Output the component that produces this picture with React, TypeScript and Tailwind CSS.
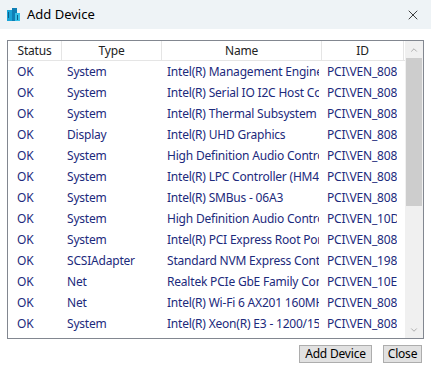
import { X, ChevronUp, ChevronDown } from "lucide-react";

const rows = [
  ["OK", "System", "Intel(R) Management Engine Interface", "PCI\\VEN_8086"],
  ["OK", "System", "Intel(R) Serial IO I2C Host Controller", "PCI\\VEN_8086"],
  ["OK", "System", "Intel(R) Thermal Subsystem - 06F9", "PCI\\VEN_8086"],
  ["OK", "Display", "Intel(R) UHD Graphics", "PCI\\VEN_8086"],
  ["OK", "System", "High Definition Audio Controller", "PCI\\VEN_8086"],
  ["OK", "System", "Intel(R) LPC Controller (HM470)", "PCI\\VEN_8086"],
  ["OK", "System", "Intel(R) SMBus - 06A3", "PCI\\VEN_8086"],
  ["OK", "System", "High Definition Audio Controller", "PCI\\VEN_10DE"],
  ["OK", "System", "Intel(R) PCI Express Root Port", "PCI\\VEN_8086"],
  ["OK", "SCSIAdapter", "Standard NVM Express Controller", "PCI\\VEN_1987"],
  ["OK", "Net", "Realtek PCIe GbE Family Controller", "PCI\\VEN_10EC"],
  ["OK", "Net", "Intel(R) Wi-Fi 6 AX201 160MHz", "PCI\\VEN_8086"],
  ["OK", "System", "Intel(R) Xeon(R) E3 - 1200/1500", "PCI\\VEN_8086"],
];

function AppIcon() {
  return (
    <svg width="16" height="16" viewBox="0 0 16 16">
      <rect x="1" y="3" width="5" height="11" fill="#1aa3d6" />
      <rect x="6" y="1" width="5" height="13" fill="#0f7fb5" />
      <rect x="9" y="6" width="5" height="8" fill="#36c0e8" />
      <rect x="2" y="5" width="1" height="6" fill="#0b5f8a" />
      <rect x="11" y="8" width="1" height="5" fill="#0b5f8a" />
    </svg>
  );
}

export default function App() {
  return (
    <div
      className="w-[431px] h-[376px] bg-white flex flex-col text-[12px] tracking-[-0.2px] overflow-hidden"
      style={{ fontFamily: '"Noto Sans", "Open Sans", sans-serif' }}
    >
      {/* Title bar */}
      <div className="h-[29px] bg-[#eef3f6] flex items-center pl-[6px] pr-[10px]">
        <AppIcon />
        <span className="ml-[5px] text-[13px] text-black tracking-normal">Add Device</span>
        <X className="ml-auto h-[16px] w-[16px] text-[#222]" strokeWidth={1.3} />
      </div>

      {/* List box */}
      <div className="mt-[11px] mx-[7px] h-[299px] border border-[#828790] flex">
        <div className="flex-1 flex flex-col overflow-hidden">
          <div className="h-[20px] flex border-b border-[#e5e5e5] text-[#222]">
            <div className="w-[54px] border-r border-[#e5e5e5] flex items-center justify-center">Status</div>
            <div className="w-[100px] border-r border-[#e5e5e5] flex items-center justify-center">Type</div>
            <div className="w-[160px] border-r border-[#e5e5e5] flex items-center justify-center">Name</div>
            <div className="w-[82px] border-r border-[#e5e5e5] flex items-center justify-center">ID</div>
          </div>
          {rows.map((r, i) => (
            <div key={i} className="h-[21px] flex items-center text-[#1c2a7c] whitespace-nowrap">
              <div className="w-[54px] pl-[9px] overflow-hidden">{r[0]}</div>
              <div className="w-[100px] pl-[5px] overflow-hidden">{r[1]}</div>
              <div className="w-[157px] pl-[5px] overflow-hidden">{r[2]}</div>
              <div className="w-[3px]" />
              <div className="w-[75px] pl-[5px] overflow-hidden">{r[3]}</div>
            </div>
          ))}
        </div>
        {/* Scrollbar */}
        <div className="w-[18px] bg-[#f0f0f0] flex flex-col">
          <div className="h-[17px] flex items-center justify-center">
            <ChevronUp className="h-[10px] w-[10px] text-[#a0a0a0]" strokeWidth={2} />
          </div>
          <div className="h-[148px] mx-[1px] bg-[#cdcdcd]" />
          <div className="flex-1" />
          <div className="h-[17px] flex items-center justify-center">
            <ChevronDown className="h-[10px] w-[10px] text-[#a0a0a0]" strokeWidth={2} />
          </div>
        </div>
      </div>

      {/* Buttons */}
      <div className="mt-[6px] flex justify-end gap-[11px] pr-[9px]">
        <button className="h-[18px] w-[73px] bg-[#e1e1e1] border border-[#adadad] text-black leading-none">
          Add Device
        </button>
        <button className="h-[18px] w-[39px] bg-[#e1e1e1] border border-[#adadad] text-black leading-none">
          Close
        </button>
      </div>
    </div>
  );
}
